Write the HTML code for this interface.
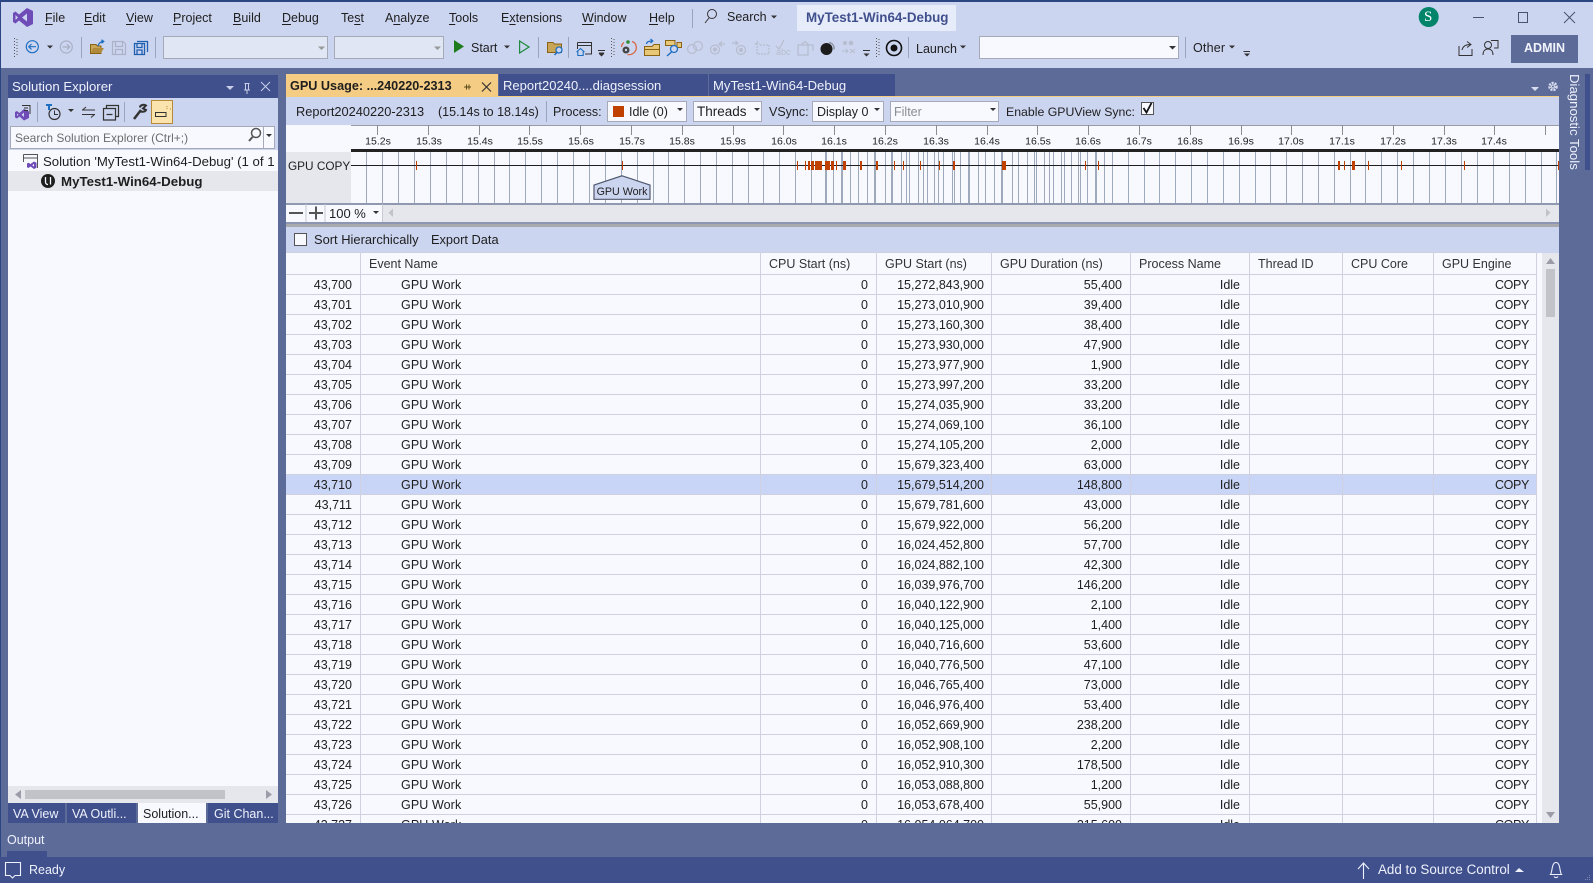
<!DOCTYPE html>
<html lang="en"><head><meta charset="utf-8"><title>MyTest1-Win64-Debug</title>
<style>
html,body{margin:0;padding:0}
body{width:1593px;height:883px;overflow:hidden;position:relative;background:#5d6b99;font:12.5px/16px "Liberation Sans","Noto Sans CJK SC",sans-serif;color:#1e1e1e}
.b{position:absolute}
.t{position:absolute;white-space:nowrap;line-height:16px}
.w{color:#eef1fb}
u{text-underline-offset:2px;text-decoration-thickness:1px}
.combo{position:absolute;box-sizing:border-box;border:1px solid #a5a9b8;background:#f7f9ff}
#tbl{position:absolute;left:286px;top:253px;width:1251px;height:570px;overflow:hidden;background:#f7f9ff}
table{border-collapse:separate;border-spacing:0;table-layout:fixed;width:1251px}
th,td{box-sizing:border-box;height:20px;padding:2px 8px 0 0;border-right:1px solid #d0d1e0;border-bottom:1px solid #d0d1e0;text-align:right;font-weight:normal;white-space:nowrap;overflow:hidden;line-height:17px;font-size:12.5px}
th{height:22px;text-align:left;padding:1px 0 0 8px;line-height:19px;color:#333}
td:nth-child(2){text-align:left;padding-left:40px;letter-spacing:.1px}
td:nth-child(4){padding-right:7px}
td:nth-child(6){padding-right:9px}
td:nth-child(9){padding-right:7px;letter-spacing:-.35px}
.sel td{background:#c8d5f6}
svg text{font-family:"Liberation Sans",sans-serif}
</style></head><body>
<div class="b" style="left:0;top:0;width:1593px;height:68px;background:#ccd5f0;border-top:2px solid #2c4583;box-sizing:border-box"></div>
<div class="b" style="left:0;top:0;width:1px;height:883px;background:#2c4583"></div>
<div class="b" style="left:797px;top:5px;width:159px;height:26px;background:#e7ecfb"></div>

<div class="combo" style="left:163px;top:36px;width:165px;height:23px;background:#e0e6f3"></div>
<div class="combo" style="left:334px;top:36px;width:110px;height:23px;background:#e0e6f3"></div>
<div class="combo" style="left:979px;top:36px;width:200px;height:23px"></div>
<div class="b" style="left:1511px;top:35px;width:67px;height:28px;background:#5d6b99"></div>

<!-- left panel -->
<div class="b" style="left:8px;top:75px;width:270px;height:23px;background:#40508d"></div>
<div class="b" style="left:8px;top:98px;width:270px;height:52px;background:#ccd5f0"></div>
<div class="b" style="left:151px;top:100px;width:22px;height:24px;box-sizing:border-box;background:#fbe3ae;border:1px solid #b88a3c"></div>
<div class="combo" style="left:10px;top:126px;width:265px;height:23px"></div>
<div class="b" style="left:8px;top:150px;width:270px;height:636px;background:#f7f9ff"></div>
<div class="b" style="left:8px;top:171px;width:270px;height:20px;background:#e6e7ed"></div>
<div class="b" style="left:8px;top:786px;width:270px;height:17px;background:#e6e7ed"></div>
<div class="b" style="left:25px;top:790px;width:200px;height:9px;background:#c2c3c9"></div>
<div class="b" style="left:8px;top:803px;width:57px;height:20px;background:#40508d"></div>
<div class="b" style="left:67px;top:803px;width:69px;height:20px;background:#40508d"></div>
<div class="b" style="left:138px;top:803px;width:68px;height:20px;background:#f7f9ff"></div>
<div class="b" style="left:208px;top:803px;width:70px;height:20px;background:#40508d"></div>

<!-- doc tabs -->
<div class="b" style="left:286px;top:74px;width:212px;height:23px;background:#f5cc84"></div>
<div class="b" style="left:499px;top:74px;width:209px;height:22px;background:#40508d"></div>
<div class="b" style="left:709px;top:74px;width:186px;height:22px;background:#40508d"></div>
<div class="b" style="left:286px;top:96px;width:1273px;height:1px;background:#f5cc84"></div>
<div class="b" style="left:286px;top:97px;width:1273px;height:28px;background:#ccd5f0"></div>
<div class="combo" style="left:607px;top:101px;width:80px;height:21px"></div>
<div class="combo" style="left:693px;top:101px;width:69px;height:21px"></div>
<div class="combo" style="left:812px;top:101px;width:72px;height:21px"></div>
<div class="combo" style="left:890px;top:101px;width:109px;height:21px"></div>
<div class="combo" style="left:1141px;top:102px;width:13px;height:13px;border-color:#555"></div>

<!-- timeline -->
<div class="b" style="left:286px;top:125px;width:1273px;height:79px;background:#f7f9ff"></div>
<div class="b" style="left:286px;top:152px;width:65px;height:52px;background:#e6e7ed"></div>
<div class="b" style="left:286px;top:204px;width:1273px;height:18px;background:#e6e7ed"></div>
<div class="b" style="left:286px;top:204px;width:96px;height:18px;background:#f7f9ff"></div>
<div class="b" style="left:286px;top:222px;width:1273px;height:2px;background:#8c96b2"></div>
<div class="b" style="left:286px;top:224px;width:1273px;height:3px;background:#a8a9ad"></div>
<div class="b" style="left:286px;top:227px;width:1273px;height:26px;background:#ccd5f0"></div>
<div class="combo" style="left:294px;top:233px;width:13px;height:13px;border-color:#555"></div>

<!-- table -->
<div class="b" style="left:1537px;top:253px;width:22px;height:570px;background:#f7f9ff"></div>
<div class="b" style="left:1542px;top:253px;width:17px;height:570px;background:#e6e7ed"></div>
<div class="b" style="left:1546px;top:269px;width:9px;height:48px;background:#c2c3c9"></div>
<div id="tbl"><table>
<colgroup><col style="width:75px"><col style="width:400px"><col style="width:116px"><col style="width:115px"><col style="width:139px"><col style="width:119px"><col style="width:93px"><col style="width:91px"><col style="width:103px"></colgroup>
<tr><th></th><th>Event Name</th><th>CPU Start (ns)</th><th>GPU Start (ns)</th><th>GPU Duration (ns)</th><th>Process Name</th><th>Thread ID</th><th>CPU Core</th><th>GPU Engine</th></tr>
<tr><td>43,700</td><td>GPU Work</td><td>0</td><td>15,272,843,900</td><td>55,400</td><td>Idle</td><td></td><td></td><td>COPY</td></tr>
<tr><td>43,701</td><td>GPU Work</td><td>0</td><td>15,273,010,900</td><td>39,400</td><td>Idle</td><td></td><td></td><td>COPY</td></tr>
<tr><td>43,702</td><td>GPU Work</td><td>0</td><td>15,273,160,300</td><td>38,400</td><td>Idle</td><td></td><td></td><td>COPY</td></tr>
<tr><td>43,703</td><td>GPU Work</td><td>0</td><td>15,273,930,000</td><td>47,900</td><td>Idle</td><td></td><td></td><td>COPY</td></tr>
<tr><td>43,704</td><td>GPU Work</td><td>0</td><td>15,273,977,900</td><td>1,900</td><td>Idle</td><td></td><td></td><td>COPY</td></tr>
<tr><td>43,705</td><td>GPU Work</td><td>0</td><td>15,273,997,200</td><td>33,200</td><td>Idle</td><td></td><td></td><td>COPY</td></tr>
<tr><td>43,706</td><td>GPU Work</td><td>0</td><td>15,274,035,900</td><td>33,200</td><td>Idle</td><td></td><td></td><td>COPY</td></tr>
<tr><td>43,707</td><td>GPU Work</td><td>0</td><td>15,274,069,100</td><td>36,100</td><td>Idle</td><td></td><td></td><td>COPY</td></tr>
<tr><td>43,708</td><td>GPU Work</td><td>0</td><td>15,274,105,200</td><td>2,000</td><td>Idle</td><td></td><td></td><td>COPY</td></tr>
<tr><td>43,709</td><td>GPU Work</td><td>0</td><td>15,679,323,400</td><td>63,000</td><td>Idle</td><td></td><td></td><td>COPY</td></tr>
<tr class="sel"><td>43,710</td><td>GPU Work</td><td>0</td><td>15,679,514,200</td><td>148,800</td><td>Idle</td><td></td><td></td><td>COPY</td></tr>
<tr><td>43,711</td><td>GPU Work</td><td>0</td><td>15,679,781,600</td><td>43,000</td><td>Idle</td><td></td><td></td><td>COPY</td></tr>
<tr><td>43,712</td><td>GPU Work</td><td>0</td><td>15,679,922,000</td><td>56,200</td><td>Idle</td><td></td><td></td><td>COPY</td></tr>
<tr><td>43,713</td><td>GPU Work</td><td>0</td><td>16,024,452,800</td><td>57,700</td><td>Idle</td><td></td><td></td><td>COPY</td></tr>
<tr><td>43,714</td><td>GPU Work</td><td>0</td><td>16,024,882,100</td><td>42,300</td><td>Idle</td><td></td><td></td><td>COPY</td></tr>
<tr><td>43,715</td><td>GPU Work</td><td>0</td><td>16,039,976,700</td><td>146,200</td><td>Idle</td><td></td><td></td><td>COPY</td></tr>
<tr><td>43,716</td><td>GPU Work</td><td>0</td><td>16,040,122,900</td><td>2,100</td><td>Idle</td><td></td><td></td><td>COPY</td></tr>
<tr><td>43,717</td><td>GPU Work</td><td>0</td><td>16,040,125,000</td><td>1,400</td><td>Idle</td><td></td><td></td><td>COPY</td></tr>
<tr><td>43,718</td><td>GPU Work</td><td>0</td><td>16,040,716,600</td><td>53,600</td><td>Idle</td><td></td><td></td><td>COPY</td></tr>
<tr><td>43,719</td><td>GPU Work</td><td>0</td><td>16,040,776,500</td><td>47,100</td><td>Idle</td><td></td><td></td><td>COPY</td></tr>
<tr><td>43,720</td><td>GPU Work</td><td>0</td><td>16,046,765,400</td><td>73,000</td><td>Idle</td><td></td><td></td><td>COPY</td></tr>
<tr><td>43,721</td><td>GPU Work</td><td>0</td><td>16,046,976,400</td><td>53,400</td><td>Idle</td><td></td><td></td><td>COPY</td></tr>
<tr><td>43,722</td><td>GPU Work</td><td>0</td><td>16,052,669,900</td><td>238,200</td><td>Idle</td><td></td><td></td><td>COPY</td></tr>
<tr><td>43,723</td><td>GPU Work</td><td>0</td><td>16,052,908,100</td><td>2,200</td><td>Idle</td><td></td><td></td><td>COPY</td></tr>
<tr><td>43,724</td><td>GPU Work</td><td>0</td><td>16,052,910,300</td><td>178,500</td><td>Idle</td><td></td><td></td><td>COPY</td></tr>
<tr><td>43,725</td><td>GPU Work</td><td>0</td><td>16,053,088,800</td><td>1,200</td><td>Idle</td><td></td><td></td><td>COPY</td></tr>
<tr><td>43,726</td><td>GPU Work</td><td>0</td><td>16,053,678,400</td><td>55,900</td><td>Idle</td><td></td><td></td><td>COPY</td></tr>
<tr><td>43,727</td><td>GPU Work</td><td>0</td><td>16,054,064,700</td><td>215,600</td><td>Idle</td><td></td><td></td><td>COPY</td></tr>
</table></div>

<div class="b" style="left:7px;top:851px;width:40px;height:6px;background:#40508d"></div>
<div class="b" style="left:0;top:857px;width:1593px;height:26px;background:#40508d"></div>
<div class="b" style="left:1585px;top:74px;width:5px;height:96px;background:#40508d"></div>

<svg class="b" style="left:0;top:0" width="1593" height="883" viewBox="0 0 1593 883" fill="none">
<!-- VS logo -->
<path fill="#6f4bb8" fill-rule="evenodd" d="M27 8L33 11V24L27 27L19 20.5L15.5 23.5L13 22V13L15.5 11.5L19 14.5ZM27 13.5L22 17.5L27 21.5ZM15.5 15V20L18 17.5Z"/>
<!-- grips -->
<g stroke="#555" stroke-dasharray="1 2"><path d="M14.5 38V57M17 39V57M611.5 38V57M614 39V57M876.5 38V57M879 39V57"/></g>
<!-- separators -->
<path stroke="#9aa3bf" d="M692.5 9V28M81.5 37V58M155.5 37V58M538.5 37V58M568.5 37V58M908.5 37V58M1185.5 37V58M37.5 102V122M124.5 102V122M546.5 101V122"/>
<!-- search icon -->
<circle cx="712" cy="14" r="4.5" stroke="#333"/><path stroke="#333" d="M709 18L705 23"/>
<path fill="#333" d="M771 15.5h6l-3 3zM47 45.5h6l-3 3zM504 45.5h6l-3 3zM960 45.5h6l-3 3zM1229 45.5h6l-3 3zM1169 46h7l-3.500 3.500zM68 109h6l-3 3zM677 108h6l-3 3zM754 108h6l-3 3zM874 108h6l-3 3zM990 108h6l-3 3zM266 134h6l-3 3zM373 211h6l-3 3z"/>
<path fill="#999" d="M318 46.500h7l-3.500 3.500zM434 46.500h7l-3.500 3.500z"/>
<!-- back / forward -->
<circle cx="32.300" cy="46.700" r="6" stroke="#1f6fc0" stroke-width="1.200"/><path stroke="#1f6fc0" stroke-width="1.200" d="M36 46.700H29M31.500 44L28.700 46.700L31.500 49.400"/>
<circle cx="66.300" cy="47" r="6" stroke="#a8b0c4" stroke-width="1.200"/><path stroke="#a8b0c4" stroke-width="1.200" d="M62.500 47H69.500M67 44.300L69.700 47L67 49.700"/>
<!-- open folder -->
<path fill="#c9a557" stroke="#8a6414" d="M90.500 44.500H96L97.500 46H101V53.500H90.500Z"/><path fill="#b08a3a" d="M91 53L93 48H104L101 53Z"/><path stroke="#1f6fc0" stroke-width="1.300" d="M98 46C99 42.500 101 41.500 103.500 41.500M101.500 39.800L103.700 41.500L101.500 43.200"/>
<!-- saves -->
<path stroke="#aab2c6" stroke-width="1.200" d="M112.500 41.500H123L125.500 44V54.500H112.500ZM115.500 41.500V46.500H122.500V41.500M115.500 54.500V49.500H122.500V54.500"/>
<path stroke="#1f5fb0" stroke-width="1.300" d="M134.500 43.500H144.500V54.500H134.500ZM137 43.500V47.500H142V43.500M137 54.500V50H142V54.500M137 41.500H147.500V52"/>
<!-- play -->
<path fill="#1e7b1e" d="M454 40L464 46.500L454 53Z"/><path stroke="#1e8b3e" stroke-width="1.200" d="M519.600 41L529 47L519.600 53Z"/>
<!-- folder search -->
<path fill="#c9a557" stroke="#8a6414" d="M547.500 42.500H553L554.500 44H561.500V52.500H547.500Z"/><circle cx="559" cy="50" r="3" fill="#ccd5f0" stroke="#1f6fc0" stroke-width="1.300"/><path stroke="#1f6fc0" stroke-width="1.500" d="M557 52.500L554.500 55"/>
<!-- window-home -->
<path stroke="#333" d="M577.500 42.500H591.500V54H585M577.500 42.500V49M577.500 45.500H591.500"/><path stroke="#1f6fc0" stroke-width="1.100" d="M576.500 52L580.500 48.500L584.500 52M577.800 51V55.500H583.200V51"/>
<path stroke="#333" d="M598 50.500H605M599 53H604"/><path fill="#333" d="M598.500 53.500h6l-3 3zM863.500 53.500h6l-3 3zM1244 53.500h6l-3 3zM1224 51.500h6"/>
<path stroke="#333" d="M863 50.500H870M1243.500 51.500H1250"/>
<!-- tomato -->
<path stroke="#d9623a" stroke-width="1.200" d="M632 41.500C637 43 638 50 633 53.500C631.500 54.500 629 55 627.500 54.500"/><circle cx="628" cy="42" r="1.800" fill="#2f8b35"/><circle cx="626" cy="50" r="3.500" fill="#444"/><circle cx="626" cy="50" r="1.200" fill="#ccd5f0"/>
<path stroke="#d9623a" stroke-width="1.200" d="M624 42.500C622 44 621.500 45.500 621.500 47"/>
<!-- folder arrows -->
<path fill="#e7c878" stroke="#8a6414" d="M644.500 46.500H652L654 44.500H659.500V55.500H644.500Z"/><path stroke="#1f6fc0" stroke-width="1.200" d="M646.500 44C646.500 41.500 649 41 652.500 41M650.500 39L652.800 41L650.500 43"/><path stroke="#8a6414" d="M645 49.500H659"/>
<!-- rects search -->
<path fill="#e7c878" stroke="#8a6414" d="M665.500 40.500H675V45.500H665.500ZM677 42.500H681.500V47.500H677Z"/><circle cx="674" cy="49" r="3.500" fill="#ccd5f0" stroke="#1f6fc0" stroke-width="1.300"/><path stroke="#1f6fc0" stroke-width="1.500" d="M671.500 52L667 56"/>
<!-- disabled icons -->
<g stroke="#b6bdce" stroke-width="1.200"><circle cx="692" cy="49" r="4.500"/><circle cx="698" cy="46" r="4.500"/><circle cx="715" cy="49.500" r="4.500"/><circle cx="715" cy="49.500" r="1.500" fill="#b6bdce"/><path d="M719 44H725M722 41.500L719 44L722 46.500"/><circle cx="741" cy="50" r="4.500"/><circle cx="741" cy="50" r="1.500" fill="#b6bdce"/><path d="M732 43H738M735.500 41L738 43L735.500 45"/><path d="M757 43V54H769V45H759M755 44.500L757.200 41.800L759.500 44.500" stroke-dasharray="2 1"/><path d="M776 46L779 49L784 40"/><path d="M798 45H808V55H798ZM801 45L805 41.500L809 45M809 45H813V51"/></g>
<text x="776" y="55" font-size="9" fill="#b6bdce">abc</text>
<circle cx="826.500" cy="49" r="6" fill="#1c1c1c"/><path stroke="#8f96a4" stroke-width="1.500" d="M829 42.500C832.500 43 834.500 46 834 49.500"/>
<g fill="#b6bdce"><circle cx="845" cy="43" r="2"/><circle cx="851" cy="43" r="2.300"/></g><path stroke="#b6bdce" d="M842 51H848M846 49L848 51L846 53M850 49L855 53M855 49L850 53"/>
<circle cx="894" cy="48" r="7.500" stroke="#111" stroke-width="1.600"/><circle cx="894" cy="48" r="3.500" fill="#111"/>
<!-- S circle -->
<circle cx="1428.700" cy="17" r="10" fill="#00846a"/>
<!-- window controls -->
<path stroke="#4a5270" d="M1473 17.500H1484M1518.500 12.500H1527.500V22.500H1518.500ZM1564 12L1575 23M1575 12L1564 23"/>
<!-- share / feedback -->
<path stroke="#333" d="M1459 46V55.500H1472V49M1462 50C1463 46 1466 44.500 1470 44.500M1467 41.500L1471 44.500L1467 47.500"/>
<circle cx="1488" cy="45" r="3.500" stroke="#333"/><path stroke="#333" d="M1483 55C1483 51 1485 49 1488 49C1491 49 1493 51 1493 55M1491 40.500H1498V48H1494"/>
<!-- panel header icons -->
<path fill="#c7cee6" d="M226 86h8l-4 4z"/><path stroke="#c7cee6" d="M244.500 83.500H249.500M245.500 83.500V90M248.500 83.500V90M244 90H250M247 90V94M261 82L270 91M270 82L261 91"/>
<!-- SE toolbar -->
<path fill="#6f4bb8" fill-rule="evenodd" d="M24 109L29 111.500V118L24 120.500L19.500 116.500L17 118.500L15 117.500V112L17 111L19.500 113ZM24 112.500L21.500 114.800L24 117ZM17 113.500V116L18.500 114.800Z"/>
<path stroke="#333" d="M22 105.500H30V114M24 108H28M24 110.500H28"/>
<path fill="#1f6fc0" d="M46 104h6v2h-2v4h-2v-4h-2z"/><circle cx="54.500" cy="114" r="5.500" stroke="#333" stroke-width="1.200"/><path stroke="#333" d="M54.500 110.500V114.500H58"/>
<path stroke="#333" d="M82 110H95M86 107L82.500 110M82 114.500H95M91 117.500L94.500 114.500"/>
<path stroke="#333" stroke-width="1.200" d="M103.500 108.500H115.500V120H103.500ZM106.500 108.500V105.500H118.500V116.500H115.500M106.500 114.500H112.500"/>
<path stroke="#333" stroke-width="2.500" d="M134 119L141 110"/><path stroke="#333" stroke-width="2" d="M140 107.500C140 105 144 104 146 105.500L143 108.500L146 110C145 112 141 112.500 140 110.500"/>
<path stroke="#333" d="M155.500 112.500H166V116.500H155.500Z"/><path stroke="#b88a3c" stroke-dasharray="1 1" d="M167 106V110M170 109H172"/>
<!-- search glass -->
<circle cx="256" cy="133" r="4.500" stroke="#555" stroke-width="1.500"/><path stroke="#555" stroke-width="2" d="M252.500 137L249 141"/><path stroke="#a5a9b8" d="M263.500 127V149"/>
<!-- solution icon -->
<path stroke="#555" d="M23.500 154.500H37.500V168M23.500 154.500V162M23.500 158H37.500"/><path fill="#6f4bb8" fill-rule="evenodd" d="M34 161.500L36.500 162.800V167.700L34 169L30.500 166.500L28.500 168L27 167.300V163.500L28.500 162.800L30.500 164ZM34 163.800L32.300 165.200L34 166.600Z"/>
<circle cx="48" cy="181" r="7" fill="#1e1e1e"/><path stroke="#f7f9ff" stroke-width="1.300" d="M45.500 177V182C45.500 184 47 184.500 48 184.500M50.500 177V184.500"/>
<!-- Doc tab icons -->
<path stroke="#5b4a1a" d="M464 87H469M466.500 84.500V89.500M469 84.500V89.500M469 87H471"/><path stroke="#333" stroke-width="1.200" d="M482 82.500L491 91.500M491 82.500L482 91.500"/>
<path fill="#d8deef" d="M1531 87h8l-4 4z"/><circle cx="1553" cy="86.500" r="3.500" stroke="#d8deef" stroke-width="2.500" stroke-dasharray="2 1"/><circle cx="1553" cy="86.500" r="1.500" stroke="#d8deef"/>
<!-- idle swatch & check -->
<rect x="613" y="106" width="11" height="11" fill="#c04000"/>
<path stroke="#111" stroke-width="1.800" d="M1143.500 108L1146.500 112.500L1151.500 103"/>
<!-- ruler -->
<path stroke="#9a9ca3" d="M351 125.500H1559"/>
<path stroke="#8a8c93" d="M377.500 125V135M428.500 125V135M479.500 125V135M529.500 125V135M580.500 125V135M631.500 125V135M682.500 125V135M733.500 125V135M783.500 125V135M834.500 125V135M885.500 125V135M936.500 125V135M987.500 125V135M1037.500 125V135M1088.500 125V135M1139.500 125V135M1190.500 125V135M1241.500 125V135M1291.500 125V135M1342.500 125V135M1393.500 125V135M1444.500 125V135M1494.500 125V135M1545.500 125V135"/>
<g font-size="10.500" fill="#1e1e1e" text-anchor="middle">
<text x="378" y="144.500">15.2s</text><text x="429" y="144.500">15.3s</text><text x="480" y="144.500">15.4s</text><text x="530" y="144.500">15.5s</text><text x="581" y="144.500">15.6s</text><text x="632" y="144.500">15.7s</text><text x="682" y="144.500">15.8s</text><text x="733" y="144.500">15.9s</text><text x="784" y="144.500">16.0s</text><text x="834" y="144.500">16.1s</text><text x="885" y="144.500">16.2s</text><text x="936" y="144.500">16.3s</text><text x="987" y="144.500">16.4s</text><text x="1038" y="144.500">16.5s</text><text x="1088" y="144.500">16.6s</text><text x="1139" y="144.500">16.7s</text><text x="1190" y="144.500">16.8s</text><text x="1241" y="144.500">16.9s</text><text x="1291" y="144.500">17.0s</text><text x="1342" y="144.500">17.1s</text><text x="1393" y="144.500">17.2s</text><text x="1444" y="144.500">17.3s</text><text x="1494" y="144.500">17.4s</text>
</g>
<!-- vsync lines -->
<path stroke="#9eaabb" shape-rendering="crispEdges" d="M366.500 152V203M382.500 152V203M398.500 152V203M414.500 152V203M430.500 152V203M446.500 152V203M462.500 152V203M478.500 152V203M494.500 152V203M509.500 152V203M525.500 152V203M541.500 152V203M557.500 152V203M573.500 152V203M589.500 152V203M605.500 152V203M621.500 152V203M637.500 152V203M653.500 152V203M668.500 152V203M684.500 152V203M700.500 152V203M716.500 152V203M732.500 152V203M748.500 152V203M763.500 152V203M779.500 152V203M795.500 152V203M811.500 152V203M825.500 152V203M826.500 152V203M833.500 152V203M850.500 152V203M858.500 152V203M867.500 152V203M885.500 152V203M891.500 152V203M892.500 152V203M901.500 152V203M906.500 152V203M909.500 152V203M918.500 152V203M923.500 152V203M927.500 152V203M934.500 152V203M938.500 152V203M943.500 152V203M952.500 152V203M954.500 152V203M960.500 152V203M978.500 152V203M985.500 152V203M994.500 152V203M1012.500 152V203M1018.500 152V203M1027.500 152V203M1034.500 152V203M1036.500 152V203M1044.500 152V203M1049.500 152V203M1053.500 152V203M1061.500 152V203M1064.500 152V203M1071.500 152V203M1078.500 152V203M1080.500 152V203M1087.500 152V203M1104.500 152V203M1112.500 152V203M1128.500 152V203M1144.500 152V203M1159.500 152V203M1175.500 152V203M1191.500 152V203M1207.500 152V203M1223.500 152V203M1239.500 152V203M1255.500 152V203M1270.500 152V203M1286.500 152V203M1302.500 152V203M1318.500 152V203M1334.500 152V203M1350.500 152V203M1365.500 152V203M1381.500 152V203M1397.500 152V203M1413.500 152V203M1429.500 152V203M1445.500 152V203M1461.500 152V203M1477.500 152V203M1493.500 152V203M1509.500 152V203M1525.500 152V203M1541.500 152V203M1556.500 152V203"/>
<path stroke="#9eaabb" stroke-width="2" shape-rendering="crispEdges" d="M842 152V203M875 152V203M969 152V203M1002 152V203M1096 152V203"/>
<rect x="351" y="149" width="1208" height="3" fill="#222"/>
<path stroke="#1e1e1e" d="M351 165.500H1559" shape-rendering="crispEdges"/>
<rect x="286" y="203" width="1273" height="2" fill="#8f9ab1"/>
<!-- events -->
<g fill="#c04000" shape-rendering="crispEdges"><rect x="416" y="161" width="1" height="9"/><rect x="622" y="161" width="1" height="9"/><rect x="797" y="161" width="1" height="9"/><rect x="805" y="161" width="1" height="9"/><rect x="808" y="161" width="2" height="9"/><rect x="811" y="161" width="3" height="9"/><rect x="815" y="161" width="7" height="9"/><rect x="825" y="161" width="5" height="9"/><rect x="831" y="161" width="3" height="9"/><rect x="836" y="161" width="1" height="9"/><rect x="843" y="161" width="3" height="9"/><rect x="860" y="161" width="2" height="9"/><rect x="876" y="161" width="2" height="9"/><rect x="894" y="161" width="1" height="9"/><rect x="903" y="161" width="1" height="9"/><rect x="920" y="161" width="1" height="9"/><rect x="939" y="161" width="1" height="9"/><rect x="953" y="161" width="2" height="9"/><rect x="1002" y="161" width="4" height="9"/><rect x="1085" y="161" width="1" height="9"/><rect x="1098" y="161" width="1" height="9"/><rect x="1338" y="161" width="2" height="9"/><rect x="1344" y="161" width="1" height="9"/><rect x="1352" y="161" width="3" height="9"/><rect x="1368" y="161" width="1" height="9"/><rect x="1401" y="161" width="1" height="9"/><rect x="1464" y="161" width="1" height="9"/><rect x="1558" y="161" width="1" height="9"/></g>
<!-- GPU Work marker -->
<path fill="#ccd5f0" stroke="#4f586c" stroke-width="1.200" d="M622 175.800L650 185V199.300H594V185Z"/>
<text x="622" y="194.800" font-size="10.700" fill="#1e1e1e" text-anchor="middle">GPU Work</text>
<!-- zoom bar -->
<path stroke="#c7c9d3" d="M306 204V222M325 204V222M382.500 204V222"/>
<path stroke="#555" stroke-width="2" d="M289 213H303M309 213H323M316 206.500V219.500"/>
<path fill="#c2c3c9" d="M393 208.500V217L388.500 212.800ZM1546 208.500V217L1550.500 212.800Z"/>
<path stroke="#d0d1e0" d="M286 252.500H1537.500"/>
<!-- scrollbars -->
<path fill="#9a9ca8" d="M1546 264L1550.500 258L1555 264ZM1546 812L1550.500 818L1555 812ZM21 790V799L15 794.500ZM266 790V799L272 794.500Z"/>
<!-- status -->
<path stroke="#eef1fb" stroke-width="1.100" d="M5.500 862.500H20.500V875.500H15L12.500 878L10 875.500H5.500Z"/>
<path stroke="#eef1fb" stroke-width="1.100" d="M1363.500 879V863M1358 869L1363.500 863L1369 869"/>
<path fill="#eef1fb" d="M1515 872L1519 868L1524 872Z"/>
<path stroke="#eef1fb" stroke-width="1.100" d="M1550.500 874.500H1561.500C1559.500 872 1560.500 862.500 1556 862.500C1551.500 862.500 1552.500 872 1550.500 874.500ZM1554 876.500C1555 878 1557 878 1558 876.500"/>
<g fill="#7a86b0"><rect x="1589" y="875" width="1" height="1"/><rect x="1587" y="877" width="1" height="1"/><rect x="1589" y="877" width="1" height="1"/><rect x="1585" y="879" width="1" height="1"/><rect x="1587" y="879" width="1" height="1"/><rect x="1589" y="879" width="1" height="1"/></g>
</svg>

<!-- menu text -->
<div class="t" style="left:45px;top:10px"><u>F</u>ile</div>
<div class="t" style="left:84px;top:10px"><u>E</u>dit</div>
<div class="t" style="left:126px;top:10px"><u>V</u>iew</div>
<div class="t" style="left:173px;top:10px"><u>P</u>roject</div>
<div class="t" style="left:233px;top:10px"><u>B</u>uild</div>
<div class="t" style="left:282px;top:10px"><u>D</u>ebug</div>
<div class="t" style="left:341px;top:10px">Te<u>s</u>t</div>
<div class="t" style="left:385px;top:10px">A<u>n</u>alyze</div>
<div class="t" style="left:449px;top:10px"><u>T</u>ools</div>
<div class="t" style="left:501px;top:10px">E<u>x</u>tensions</div>
<div class="t" style="left:582px;top:10px"><u>W</u>indow</div>
<div class="t" style="left:649px;top:10px"><u>H</u>elp</div>
<div class="t" style="left:727px;top:9px">Search</div>
<div class="t" style="left:806px;top:10px;font-weight:bold;font-size:13.400px;color:#40508d">MyTest1-Win64-Debug</div>
<div class="t" style="left:1424px;top:9px;color:#fff;font:15px/16px 'Liberation Serif',serif">S</div>
<div class="t" style="left:471px;top:40px">Start</div>
<div class="t" style="left:916px;top:41px">Launch</div>
<div class="t" style="left:1193px;top:40px;letter-spacing:.2px">Other</div>
<div class="t" style="left:1511px;width:67px;top:40px;text-align:center;font-weight:bold;color:#f2f4fc">ADMIN</div>

<div class="t w" style="left:12px;top:79px;font-size:13.200px">Solution Explorer</div>
<div class="t" style="left:15px;top:130px;color:#6d6d6d;font-size:12px">Search Solution Explorer (Ctrl+;)</div>
<div class="t" style="left:43px;top:154px;width:232px;overflow:hidden;font-size:13.200px">Solution 'MyTest1-Win64-Debug' (1 of 1 project)</div>
<div class="t" style="left:61px;top:174px;font-weight:bold;font-size:13.300px">MyTest1-Win64-Debug</div>
<div class="t w" style="left:13px;top:806px">VA View</div>
<div class="t w" style="left:72px;top:806px">VA Outli...</div>
<div class="t" style="left:143px;top:806px">Solution...</div>
<div class="t w" style="left:214px;top:806px">Git Chan...</div>
<div class="t w" style="left:7px;top:832px">Output</div>
<div class="t w" style="left:29px;top:862px">Ready</div>
<div class="t w" style="left:1378px;top:862px;font-size:13.400px">Add to Source Control</div>

<div class="t" style="left:290px;top:78px;font-weight:bold;font-size:12.650px">GPU Usage: ...240220-2313</div>
<div class="t w" style="left:503px;top:78px;font-size:13px">Report20240....diagsession</div>
<div class="t w" style="left:713px;top:78px;font-size:13.100px">MyTest1-Win64-Debug</div>
<div class="t w" style="left:1566px;top:74px;font-size:13.200px;transform-origin:0 0;transform:translate(16px,0) rotate(90deg)">Diagnostic Tools</div>

<div class="t" style="left:296px;top:104px;font-size:12.800px">Report20240220-2313</div>
<div class="t" style="left:438px;top:104px">(15.14s to 18.14s)</div>
<div class="t" style="left:553px;top:104px">Process:</div>
<div class="t" style="left:629px;top:104px">Idle (0)</div>
<div class="t" style="left:697px;top:104px;font-size:13.500px">Threads</div>
<div class="t" style="left:769px;top:104px">VSync:</div>
<div class="t" style="left:817px;top:104px">Display 0</div>
<div class="t" style="left:894px;top:104px;color:#8a8c93">Filter</div>
<div class="t" style="left:1006px;top:104px;font-size:12.300px">Enable GPUView Sync:</div>
<div class="t" style="left:288px;top:158px;font-size:11.800px">GPU COPY</div>
<div class="t" style="left:329px;top:206px;font-size:13px">100 %</div>
<div class="t" style="left:314px;top:232px;font-size:12.900px">Sort Hierarchically</div>
<div class="t" style="left:431px;top:232px;font-size:12.800px">Export Data</div>
</body></html>
